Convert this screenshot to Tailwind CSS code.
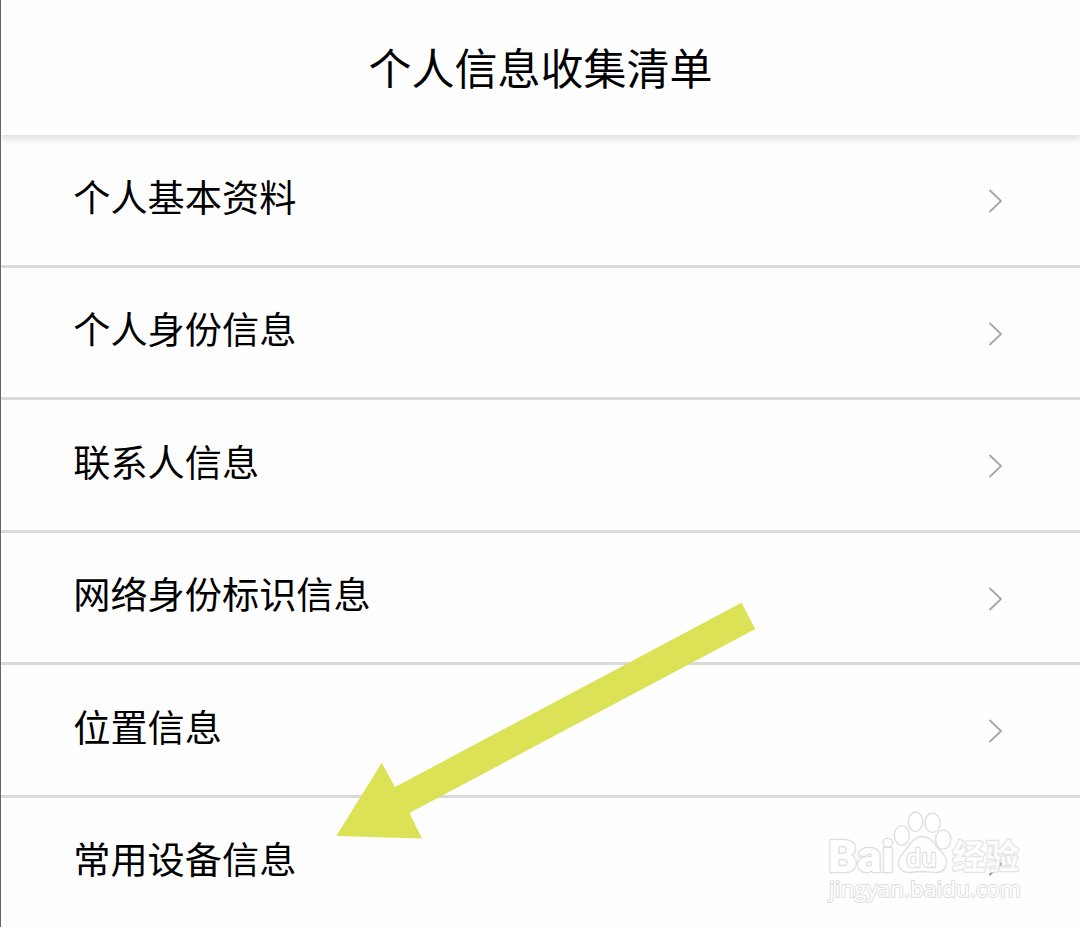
<!DOCTYPE html>
<html lang="zh-CN">
<head>
    <meta charset="UTF-8">
    <meta name="viewport" content="width=device-width, initial-scale=1.0">
    <title>个人信息收集清单</title>
    <script src="https://cdn.jsdelivr.net/npm/@tailwindcss/browser@4"></script>
</head>
<body class="bg-white text-black font-['Noto_Sans_CJK_SC',sans-serif]">

    <div class="relative w-full h-[927px] overflow-hidden border-l border-[#666666] bg-[#fefefe]">
        <header class="relative h-[135px] flex items-center justify-center pb-1 bg-[#fefefe] shadow-[0_4px_7px_rgba(0,0,0,0.13)]">
            <h1 class="text-[43px] leading-[60px]">个人信息收集清单</h1>
        </header>

        <ul>
            <li class="h-[132.5px] flex items-center justify-between pl-[72.2px] pr-[77px] border-b-3 border-[#dadada]">
                <span class="text-[37.2px] leading-[50px] pb-2">个人基本资料</span>
                <svg class="w-4 h-7 mt-[3px]" viewBox="0 0 16 28" fill="none" stroke="#a6a6a6" stroke-width="1.8"><path d="M2.5 3l11.5 11-11.5 11"/></svg>
            </li>
            <li class="h-[132.5px] flex items-center justify-between pl-[72.2px] pr-[77px] border-b-3 border-[#dadada]">
                <span class="text-[37.2px] leading-[50px] pb-2">个人身份信息</span>
                <svg class="w-4 h-7 mt-[3px]" viewBox="0 0 16 28" fill="none" stroke="#a6a6a6" stroke-width="1.8"><path d="M2.5 3l11.5 11-11.5 11"/></svg>
            </li>
            <li class="h-[132.5px] flex items-center justify-between pl-[72.2px] pr-[77px] border-b-3 border-[#dadada]">
                <span class="text-[37.2px] leading-[50px] pb-2">联系人信息</span>
                <svg class="w-4 h-7 mt-[3px]" viewBox="0 0 16 28" fill="none" stroke="#a6a6a6" stroke-width="1.8"><path d="M2.5 3l11.5 11-11.5 11"/></svg>
            </li>
            <li class="h-[132.5px] flex items-center justify-between pl-[72.2px] pr-[77px] border-b-3 border-[#dadada]">
                <span class="text-[37.2px] leading-[50px] pb-2">网络身份标识信息</span>
                <svg class="w-4 h-7 mt-[3px]" viewBox="0 0 16 28" fill="none" stroke="#a6a6a6" stroke-width="1.8"><path d="M2.5 3l11.5 11-11.5 11"/></svg>
            </li>
            <li class="h-[132.5px] flex items-center justify-between pl-[72.2px] pr-[77px] border-b-3 border-[#dadada]">
                <span class="text-[37.2px] leading-[50px] pb-2">位置信息</span>
                <svg class="w-4 h-7 mt-[3px]" viewBox="0 0 16 28" fill="none" stroke="#a6a6a6" stroke-width="1.8"><path d="M2.5 3l11.5 11-11.5 11"/></svg>
            </li>
            <li class="h-[132.5px] flex items-center justify-between pl-[72.2px] pr-[77px] border-b-3 border-[#dadada]">
                <span class="text-[37.2px] leading-[50px] pb-2">常用设备信息</span>
                <svg class="w-4 h-7 mt-[3px]" viewBox="0 0 16 28" fill="none" stroke="#8c8c8c" stroke-width="1.8"><path d="M2.5 3l11.5 11-11.5 11"/></svg>
            </li>
        </ul>

        <!-- Arrow pointing at the last row -->
        <svg class="absolute left-[335px] top-[602px] w-[420px] h-[238px]" viewBox="336 602 420 238" fill="#dbe255">
            <path d="M336.3 836L381.7 762.7L395 787L741.5 602.7L755.3 629L409.5 813L422 838.5Z"/>
        </svg>

        <!-- Watermark -->
        <svg class="absolute left-[819px] top-[802px] w-[210px] h-[110px]" viewBox="820 802 210 110" fill="#ffffff" stroke="#dedede" stroke-width="1.3" stroke-linejoin="round">
            <text x="828" y="872" font-family="Roboto, sans-serif" font-weight="900" font-size="45" textLength="66" lengthAdjust="spacingAndGlyphs" paint-order="stroke" stroke-width="2.6">Bai</text>
            <ellipse cx="901.8" cy="835.5" rx="7.6" ry="9.8"/>
            <ellipse cx="915.5" cy="821.8" rx="7.2" ry="9.8"/>
            <ellipse cx="932.5" cy="822.8" rx="7.6" ry="9.6"/>
            <ellipse cx="943.2" cy="839.5" rx="7.6" ry="9.6"/>
            <path d="M922 836.5C914 836.5 911 843 907 848C903 853 898.5 857 898.5 863C898.5 869 903 872.5 909 872.5C914 872.5 917 871.5 922 871.5C928 871.5 932 872.5 937 872.5C943 872.5 946.5 868 946.5 862C946.5 855 941 852 937 847C933 840 929 836.5 922 836.5Z"/>
            <text x="906" y="867" font-family="Open Sans, sans-serif" font-weight="600" font-size="26" textLength="31" lengthAdjust="spacingAndGlyphs" paint-order="stroke" stroke-width="2.4">du</text>
            <text x="952" y="869" font-family="Noto Sans CJK SC, sans-serif" font-weight="700" font-size="34" textLength="67" lengthAdjust="spacingAndGlyphs" paint-order="stroke" stroke-width="2.4" stroke-opacity="0.8" fill-opacity="0.85">经验</text>
            <text x="829" y="897" font-family="Open Sans, sans-serif" font-size="21.5" textLength="192" lengthAdjust="spacingAndGlyphs" paint-order="stroke" stroke-width="2">jingyan.baidu.com</text>
        </svg>
    </div>

</body>
</html>
